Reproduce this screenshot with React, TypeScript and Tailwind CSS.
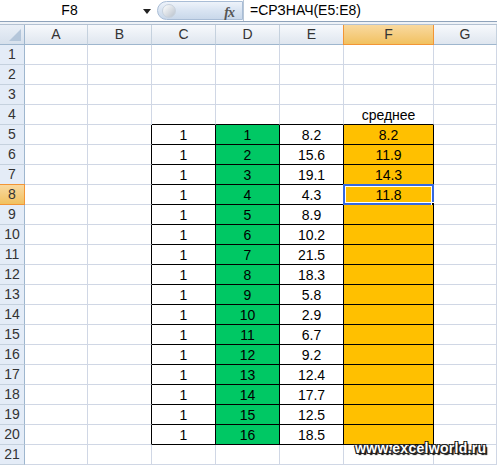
import React from "react";

const cols = ["A", "B", "C", "D", "E", "F", "G"];
const eVals = ["8.2", "15.6", "19.1", "4.3", "8.9", "10.2", "21.5", "18.3", "5.8", "2.9", "6.7", "9.2", "12.4", "17.7", "12.5", "18.5"];
const fVals = ["8.2", "11.9", "14.3", "11.8"];

function Cell({ row, col }: { row: number; col: number }) {
  // col: 0=A .. 6=G
  const inTable = row >= 5 && row <= 20 && col >= 2 && col <= 5;
  let text = "";
  let bg = "bg-white";
  if (inTable) {
    const i = row - 5;
    if (col === 2) text = "1";
    if (col === 3) {
      text = String(i + 1);
      bg = "bg-[#00c864]";
    }
    if (col === 4) text = eVals[i];
    if (col === 5) {
      text = fVals[i] ?? "";
      bg = "bg-[#ffc000]";
    }
  }
  if (row === 4 && col === 5) text = "среднее";

  const rightBlack = inTable || (col === 1 && row >= 5 && row <= 20);
  const bottomBlack = inTable || (row === 4 && col >= 2 && col <= 5);
  const selected = row === 8 && col === 5;

  return (
    <div
      className={`relative flex items-center justify-center pt-[2px] text-[14px] text-black border-r border-b ${bg} ${
        rightBlack ? "border-r-black" : "border-r-[#d0d7e5]"
      } ${bottomBlack ? "border-b-black" : "border-b-[#d0d7e5]"}`}
    >
      {text}
      {selected && (
        <>
          <div className="absolute -left-px -top-px -right-px -bottom-px border-2 border-[#3568e0]">
            <div className="w-full h-full border border-white" />
          </div>
          <div className="absolute -right-[3px] -bottom-[3px] w-[5px] h-[5px] bg-black border border-white" />
        </>
      )}
    </div>
  );
}

export default function App() {
  const rows = Array.from({ length: 21 }, (_, i) => i + 1);
  return (
    <div className="relative w-[497px] h-[465px] overflow-hidden bg-white font-['Liberation_Sans',Arial,sans-serif]">
      {/* Formula bar */}
      <div className="flex h-[22px] bg-white border-b border-[#8fa3bb]">
        <div className="relative w-[157px] flex items-center justify-center text-[14px] text-black pr-[18px]">
          F8
          <svg className="absolute right-[6px] top-[9px]" width="8" height="5" viewBox="0 0 8 5">
            <path d="M0 0 H8 L4 5 Z" fill="#222" />
          </svg>
        </div>
        <div className="relative my-[1px] w-[86px] rounded-l-full border border-[#a9bdd6] bg-gradient-to-b from-[#eef3fa] via-[#d9e4f2] to-[#c9d8ea]">
          <div className="absolute left-[4px] top-[2px] w-[14px] h-[14px] rounded-full bg-gradient-to-br from-white to-[#b9c2cc] border border-[#c8d2dd]" />
          <span className="absolute right-[8px] top-[0px] font-['Liberation_Serif',serif] italic font-bold text-[14px] text-[#555] tracking-[-1px]">
            fx
          </span>
        </div>
        <div className="flex items-center pl-[6px] text-[14px] text-black border-l border-[#b8c6d6]">=СРЗНАЧ(E5:E8)</div>
      </div>
      <div className="h-[3px] bg-[#eef2f7] border-b border-[#b3c1d2]" />

      {/* Sheet */}
      <div className="grid grid-cols-[25px_63px_64px_64px_64px_64px_90px_1fr] auto-rows-[20px]">
        {/* corner */}
        <div className="relative bg-gradient-to-b from-[#e9eff7] to-[#d6e0ec] border-r border-b border-[#9eb6ce]">
          <svg className="absolute right-[3px] bottom-[3px]" width="12" height="12" viewBox="0 0 12 12">
            <path d="M12 0 V12 H0 Z" fill="#b4c6da" />
          </svg>
        </div>
        {cols.map((c) => (
          <div
            key={c}
            className={`flex items-center justify-center text-[14px] border-b ${
              c === "F"
                ? "bg-gradient-to-b from-[#f9d99f] to-[#f1c15f] border-x border-[#f29536] -ml-px text-[#333]"
                : "bg-gradient-to-b from-[#f7f9fc] to-[#dfe6ef] border-r border-[#c5d1de] border-b-[#9eb6ce] text-[#333]"
            }`}
          >
            {c}
          </div>
        ))}
        {rows.map((r) => (
          <React.Fragment key={r}>
            <div
              className={`flex items-center justify-center text-[14px] text-[#333] border-r border-b ${
                r === 8
                  ? "bg-gradient-to-b from-[#f9d99f] to-[#f1c15f] border-[#f29536] border-t -mt-px"
                  : "bg-[#e4ecf7] border-r-[#9eb6ce] border-b-[#c5d1de]"
              }`}
            >
              {r}
            </div>
            {cols.map((_, ci) => (
              <Cell key={ci} row={r} col={ci} />
            ))}
          </React.Fragment>
        ))}
      </div>

      {/* watermark */}
      <div className="absolute left-[355px] top-[438px] text-[14px] font-bold text-white tracking-[0.3px] [text-shadow:1px_1px_0_#222,-1px_-1px_0_#222,1px_-1px_0_#222,-1px_1px_0_#222,2px_2px_1px_#000]">
        www.excelworld.ru
      </div>
    </div>
  );
}
